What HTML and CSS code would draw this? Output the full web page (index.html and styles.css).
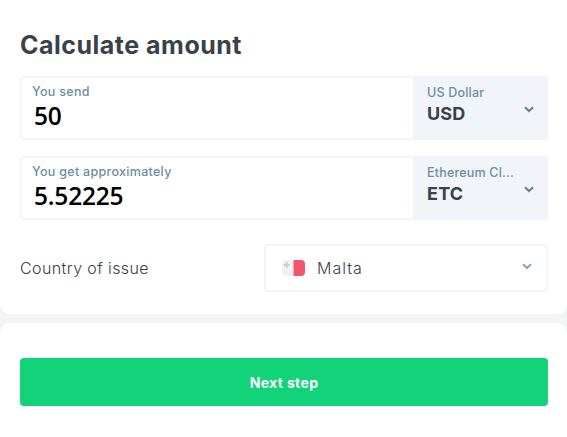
FILE: index.html
```html
<!DOCTYPE html>
<html lang="en">
<head>
    <meta charset="UTF-8">
    <title>Calculate amount</title>
    <link rel="stylesheet" href="styles.css">
</head>
<body>
    <!-- Calculator -->
    <section class="card calc">
        <h2>Calculate amount</h2>

        <div class="amount-row">
            <div class="amount">
                <label>You send</label>
                <div class="value">50</div>
            </div>
            <div class="currency">
                <div>
                    <span class="currency-name">US Dollar</span>
                    <strong>USD</strong>
                </div>
                <svg class="chevron" width="10" height="7" viewBox="0 0 10 7"><path d="M1 1.200 5 5 9 1.200" fill="none" stroke="#5d8299" stroke-width="2"/></svg>
            </div>
        </div>

        <div class="amount-row">
            <div class="amount">
                <label>You get approximately</label>
                <div class="value">5.52225</div>
            </div>
            <div class="currency">
                <div>
                    <span class="currency-name">Ethereum Cl...</span>
                    <strong>ETC</strong>
                </div>
                <svg class="chevron" width="10" height="7" viewBox="0 0 10 7"><path d="M1 1.200 5 5 9 1.200" fill="none" stroke="#5d8299" stroke-width="2"/></svg>
            </div>
        </div>

        <div class="country-row">
            <span class="country-label">Country of issue</span>
            <div class="country-select">
                <svg class="flag" width="23" height="16" viewBox="0 0 23 16">
                    <path d="M4 0H11.500V16H4A4 4 0 0 1 0 12V4A4 4 0 0 1 4 0Z" fill="#f0f1f5"/>
                    <path d="M11.500 0H19A4 4 0 0 1 23 4V12A4 4 0 0 1 19 16H11.500Z" fill="#f2566b"/>
                    <path d="M3.700 2.200H5.700V4H7.500V6H5.700V7.800H3.700V6H1.900V4H3.700Z" fill="#c9ccd3"/>
                </svg>
                <span class="country-name">Malta</span>
                <svg class="chevron light" width="10" height="7" viewBox="0 0 10 7"><path d="M1 1.200 5 5 9 1.200" fill="none" stroke="#86a5b8" stroke-width="2"/></svg>
            </div>
        </div>
    </section>

    <!-- Next step -->
    <section class="card actions">
        <button type="button">Next step</button>
    </section>
</body>
</html>
```

FILE: styles.css
```css
html, body {
    height: 100%;
}

body {
    margin: 0;
    background-color: #f2f4f5;
    font-family: "Inter", "Liberation Sans", sans-serif;
    color: #3a4149;
    display: flex;
    flex-direction: column;
    gap: 9px;
    overflow: hidden;
}

.card {
    background-color: #fff;
    padding: 0 19px 0 20px;
}

.calc {
    height: 314px;
    box-sizing: border-box;
    padding-top: 30px;
    border-radius: 0 0 10px 10px;
}

.actions {
    flex: 1;
    padding-top: 35px;
    border-radius: 10px 10px 0 0;
}

h2 {
    margin: 0 0 16px;
    font-size: 25px;
    line-height: 30px;
    font-weight: 700;
    letter-spacing: 0.5px;
}

.amount-row {
    display: flex;
    height: 64px;
    margin-bottom: 16px;
}

.amount {
    flex: 1;
    border: 2px solid #f2f5f8;
    border-right: 0;
    border-radius: 4px 0 0 4px;
    padding: 6px 0 0 10px;
}

.amount label {
    display: block;
    font-size: 12.5px;
    line-height: 16px;
    font-weight: 500;
    letter-spacing: 0.3px;
    color: #6b8ea3;
}

.value {
    margin: 1px 0 0 2px;
    font-family: "Open Sans", sans-serif;
    font-size: 24.5px;
    line-height: 30px;
    font-weight: 600;
    letter-spacing: -0.2px;
    color: #000;
}

.currency {
    width: 135px;
    box-sizing: border-box;
    background-color: #f1f4f8;
    border-radius: 0 4px 4px 0;
    padding: 9px 14px 0 14px;
    display: flex;
    justify-content: space-between;
}

.currency-name {
    display: block;
    font-size: 12.5px;
    line-height: 16px;
    font-weight: 500;
    letter-spacing: 0.2px;
    color: #6b8ea3;
    white-space: nowrap;
}

.currency strong {
    display: block;
    margin-top: 1px;
    font-size: 18px;
    line-height: 24px;
    font-weight: 700;
    letter-spacing: 0.2px;
}

.chevron {
    margin-top: 21px;
}

.country-row {
    display: flex;
    align-items: center;
    justify-content: space-between;
    margin-top: 24px;
}

.country-label {
    font-size: 16px;
    font-weight: 300;
    letter-spacing: 0.4px;
    color: #3a4149;
    margin-bottom: 1px;
}

.country-select {
    width: 284px;
    height: 48px;
    box-sizing: border-box;
    border: 2px solid #f2f5f8;
    border-radius: 4px;
    padding: 0 14px 0 16px;
    display: flex;
    align-items: center;
}

.flag {
    margin-right: 12px;
}

.country-name {
    flex: 1;
    font-size: 16px;
    font-weight: 300;
    letter-spacing: 1px;
    color: #3a4149;
}

.chevron.light {
    margin: 0 0 4px;
}

button {
    display: block;
    width: 100%;
    height: 48px;
    border: none;
    border-radius: 4px;
    background-color: #12d27a;
    color: #fff;
    font-family: inherit;
    font-size: 14px;
    font-weight: 700;
    letter-spacing: 0.35px;
}
```
